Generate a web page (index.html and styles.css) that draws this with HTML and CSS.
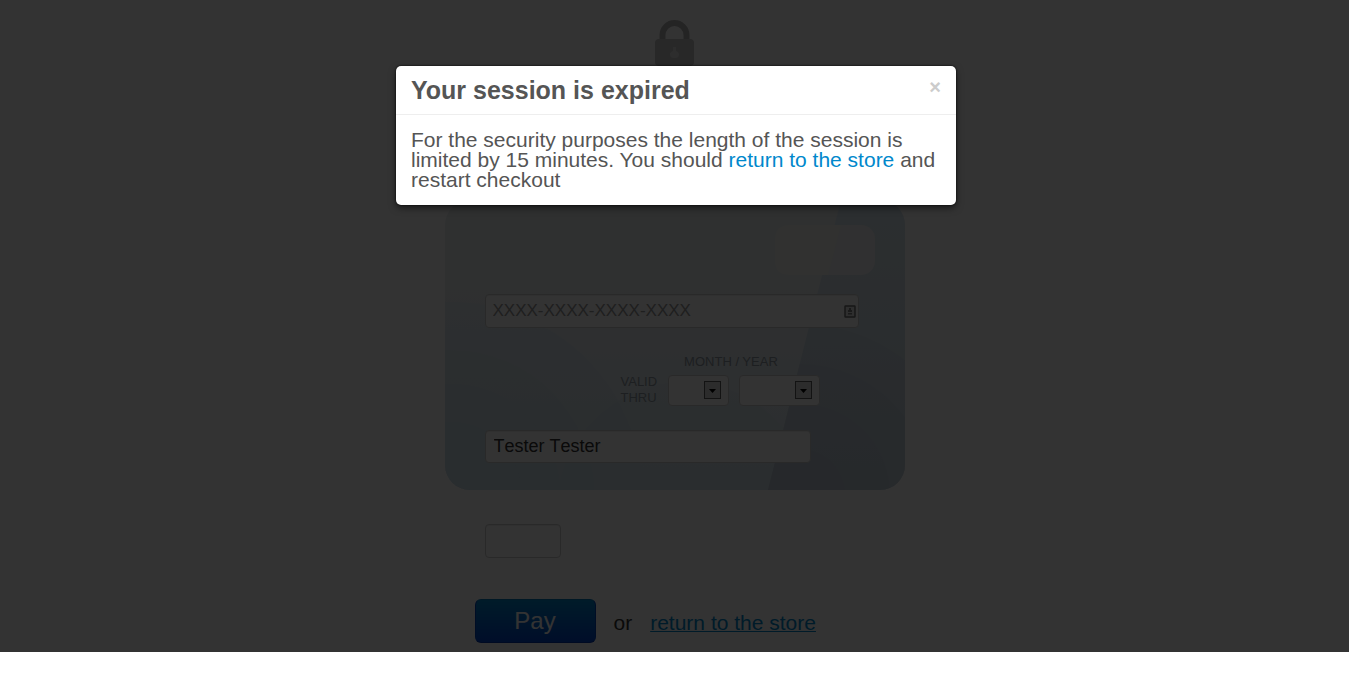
FILE: index.html
```html
<!DOCTYPE html>
<html lang="en">
<head>
<meta charset="utf-8">
<title>Checkout</title>
<link rel="stylesheet" href="styles.css">
</head>
<body>
<div class="page">
  <form class="checkout">
    <svg class="lock" viewBox="0 0 39 46" aria-hidden="true">
      <path d="M7.500 19V15a12 12 0 0 1 24 0V19" fill="none" stroke="#b4b4b4" stroke-width="6"/>
      <rect y="19" width="39" height="27" rx="4" fill="#c6c6c6"/>
      <path d="M18 27h3v4q3 1 3 3.500a4.500 3.500 0 0 1-9 0q0-2.500 3-3.500z" fill="#e2e2e2"/>
    </svg>
    <div class="card">
      <svg class="card-art" viewBox="0 0 460 290" preserveAspectRatio="none" aria-hidden="true">
        <defs>
          <linearGradient id="base" x1="0" y1="0" x2="0" y2="1">
            <stop offset="0.300" stop-color="#e9edf1"/>
            <stop offset="1" stop-color="#d6e4ec"/>
          </linearGradient>
          <linearGradient id="band" x1="0" y1="0" x2="0" y2="1">
            <stop offset="0" stop-color="#d8e6ee"/>
            <stop offset="1" stop-color="#ccd8e1"/>
          </linearGradient>
          <clipPath id="slant"><path d="M396 0H460V290H323z"/></clipPath>
        </defs>
        <rect width="460" height="290" fill="url(#base)"/>
        <g fill="#c2dcea" fill-opacity=".22">
          <circle cx="5" cy="294" r="192"/>
          <circle cx="5" cy="294" r="144"/>
          <circle cx="5" cy="294" r="110"/>
          <circle cx="5" cy="294" r="72"/>
          <circle cx="240" cy="310" r="128"/>
        </g>
        <g clip-path="url(#slant)">
          <rect width="460" height="290" fill="url(#band)"/>
          <g fill="#aebccc" fill-opacity=".16">
            <circle cx="355" cy="294" r="170"/>
            <circle cx="355" cy="294" r="130"/>
            <circle cx="355" cy="294" r="90"/>
            <circle cx="355" cy="294" r="45"/>
          </g>
        </g>
        <rect x="330" y="25" width="100" height="50" rx="14" fill="#eff0f2"/>
        <path d="M344 25H396L383 75H344Q330 75 330 61V39Q330 25 344 25z" fill="#f2f3f0"/>
      </svg>
      <div class="number">
        <input class="field" type="text" placeholder="XXXX-XXXX-XXXX-XXXX" aria-label="Card number">
        <svg class="fill-icon" viewBox="0 0 12 13" aria-hidden="true">
          <rect x="1" y="1" width="10" height="11" rx=".5" fill="#e4e4e4" stroke="#707070" stroke-width="1.500"/>
          <path d="M5 3h2v2h1v2H4V5h1zM4 8h4v1.500H4z" fill="#808080"/>
        </svg>
      </div>
      <div class="expiry">
        <span class="valid">VALID<br>THRU</span>
        <fieldset class="dates">
          <legend class="date-label">MONTH / YEAR</legend>
          <div class="pickers">
            <span class="picker month"><select aria-label="Month"><option></option></select>
              <svg class="arrow" viewBox="0 0 17 18" aria-hidden="true"><rect x=".5" y=".5" width="16" height="17" fill="#dadada" stroke="#606060"/><path d="M5 8h7l-3.500 4z"/></svg></span>
            <span class="picker year"><select aria-label="Year"><option></option></select>
              <svg class="arrow" viewBox="0 0 17 18" aria-hidden="true"><rect x=".5" y=".5" width="16" height="17" fill="#dadada" stroke="#606060"/><path d="M5 8h7l-3.500 4z"/></svg></span>
          </div>
        </fieldset>
      </div>
      <input class="field holder" type="text" value="Tester Tester" aria-label="Card holder">
    </div>
    <input class="field code" type="text" aria-label="Security code">
    <div class="actions">
      <button class="pay" type="button">Pay</button>
      <span>or</span>
      <a class="back" href="#">return to the store</a>
    </div>
  </form>
  <div class="backdrop">
    <section class="modal" role="dialog" aria-labelledby="modal-title">
      <header class="modal-header">
        <h3 class="modal-title" id="modal-title">Your session is expired</h3>
        <button class="close" type="button" aria-label="Close">×</button>
      </header>
      <p class="modal-body">For the security purposes the length of the session is limited by 15 minutes. You should <a href="#">return to the store</a> and restart checkout</p>
    </section>
  </div>
</div>
</body>
</html>
```
FILE: styles.css
```css
* { box-sizing: border-box; }
body {
  margin: 0;
  background: #fff;
  color: #555;
  font: 21px/20px "Liberation Sans", Arial, sans-serif;
}
.page { position: relative; padding: 20px 0 9px; }
.checkout {
  display: flex;
  flex-direction: column;
  width: 100%;
  max-width: 460px;
  margin: 0 auto;
}
.lock { width: 39px; height: 46px; align-self: center; margin-bottom: 134px; }
.card {
  position: relative;
  display: flex;
  flex-direction: column;
  padding: 94px 40px 27px;
  border-radius: 25px;
  overflow: hidden;
}
.card-art { position: absolute; inset: 0; width: 100%; height: 100%; }
.field {
  display: block;
  height: 34px;
  padding: 0 8px;
  border: 1px solid #ccc;
  border-radius: 4px;
  background: #fff;
  color: #333;
  font: 18px/20px "Liberation Sans", Arial, sans-serif;
  font-kerning: none;
  box-shadow: inset 0 1px 1px rgba(0, 0, 0, .08);
}
.number { position: relative; width: 374px; }
.number .field { width: 100%; padding: 0 7px; font-size: 17px; }
.number .field::placeholder { color: #999; opacity: 1; }
.fill-icon { position: absolute; right: 3px; top: 11px; width: 12px; height: 13px; }
.expiry {
  position: relative;
  display: flex;
  align-items: flex-end;
  gap: 11px;
  margin: 26px 0 24px 136px;
  color: #909ba3;
  font-size: 13px;
  line-height: 16px;
}
.dates { margin: 0; padding: 0; border: 0; }
.date-label { padding: 0 0 5px 16px; }
.pickers { display: flex; gap: 10px; }
.picker { position: relative; height: 31px; }
.month { width: 61px; }
.year { width: 81px; }
.picker select {
  display: block;
  width: 100%;
  height: 100%;
  border: 1px solid #ccc;
  border-radius: 4px;
  background: #fff;
  appearance: none;
}
.arrow { position: absolute; right: 8px; top: 6px; width: 17px; height: 18px; }
.holder { position: relative; width: 326px; height: 33px; }
.code { width: 76px; margin: 34px 0 41px 40px; }
.actions { display: flex; align-items: center; padding-left: 30px; gap: 18px; color: #333; line-height: 24px; }
.pay {
  width: 121px;
  height: 44px;
  padding: 0;
  border: 1px solid #0055cc;
  border-color: #0077bb #0044bb #0033aa;
  border-radius: 6px;
  background: linear-gradient(#0088cc, #0044cc);
  color: #fff;
  font: 24px/30px "Liberation Sans", Arial, sans-serif;
}
.actions span, .back { padding-top: 4px; }
.back { color: #0088cc; text-decoration-thickness: 1px; }
.backdrop {
  position: absolute;
  inset: 0;
  display: flex;
  justify-content: center;
  align-items: flex-start;
  padding: 66px 0 0 3px;
  background: rgba(0, 0, 0, .8);
}
.modal {
  width: 560px;
  max-width: 100%;
  border-radius: 5px;
  background: #fff;
  box-shadow: 0 3px 7px rgba(0, 0, 0, .5), 0 0 2px #000;
}
.modal-header {
  display: flex;
  justify-content: space-between;
  align-items: flex-start;
  padding: 9px 15px;
  border-bottom: 1px solid #eee;
}
.modal-title { margin: 0; font-size: 25px; line-height: 30px; }
.close {
  margin-top: 2px;
  padding: 0;
  border: 0;
  background: none;
  color: #ccc;
  font: bold 20px/20px "Liberation Sans", Arial, sans-serif;
}
.modal-body { margin: 0; padding: 15px; }
.modal-body a { color: #0088cc; text-decoration: none; }
```
